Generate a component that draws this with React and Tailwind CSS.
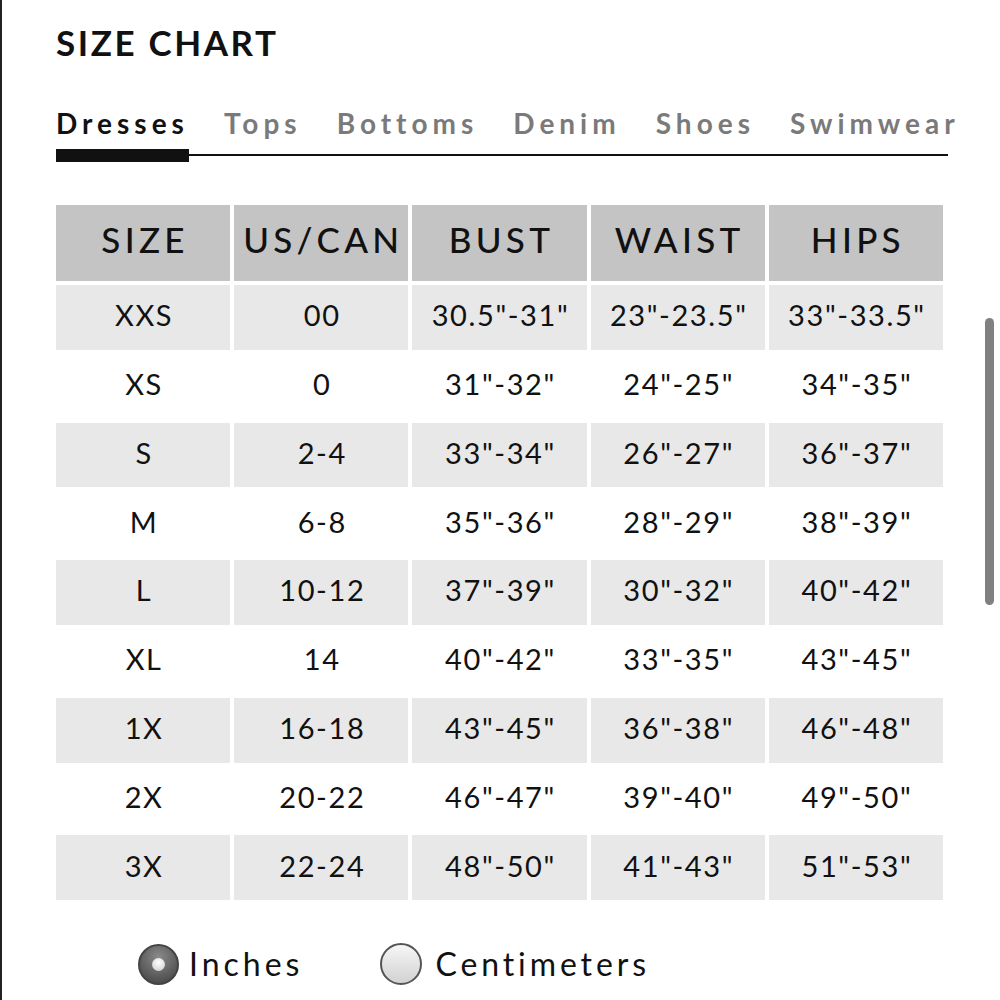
import React from "react";

const headers = ["SIZE", "US/CAN", "BUST", "WAIST", "HIPS"];
const rows = [
  ["XXS", "00", '30.5"-31"', '23"-23.5"', '33"-33.5"'],
  ["XS", "0", '31"-32"', '24"-25"', '34"-35"'],
  ["S", "2-4", '33"-34"', '26"-27"', '36"-37"'],
  ["M", "6-8", '35"-36"', '28"-29"', '38"-39"'],
  ["L", "10-12", '37"-39"', '30"-32"', '40"-42"'],
  ["XL", "14", '40"-42"', '33"-35"', '43"-45"'],
  ["1X", "16-18", '43"-45"', '36"-38"', '46"-48"'],
  ["2X", "20-22", '46"-47"', '39"-40"', '49"-50"'],
  ["3X", "22-24", '48"-50"', '41"-43"', '51"-53"'],
];
const tabs = ["Dresses", "Tops", "Bottoms", "Denim", "Shoes", "Swimwear"];

export default function App() {
  return (
    <div
      className="relative w-[1000px] h-[1000px] bg-white overflow-hidden border-l-2 border-[#222]"
      style={{ fontFamily: "Lato, 'Open Sans', sans-serif" }}
    >
      <div className="pl-[54px] pt-[22px]">
        <h1 className="text-[35px] leading-[40px] font-bold tracking-[2.6px] text-[#111]">SIZE CHART</h1>

        <div className="mt-[44px] flex items-center gap-[35px] text-[28px] leading-[34px] font-bold tracking-[5px] text-[#7a7a7a]">
          {tabs.map((t, i) => (
            <span key={t} className={i === 0 ? "text-[#111]" : ""}>{t}</span>
          ))}
        </div>
        <div className="relative mt-[9px] w-[892px] h-[13px]">
          <div className="absolute left-0 top-[5px] w-[892px] h-[2px] bg-[#111]" />
          <div className="absolute left-0 top-0 w-[133px] h-[13px] bg-[#111]" />
        </div>

        <div className="mt-[43px] w-[887px] grid grid-cols-5 gap-[4px]">
          {headers.map((h) => (
            <div key={h} className="h-[76px] pb-[7px] pl-[4px] bg-[#c4c4c4] flex items-center justify-center text-[35px] tracking-[4.3px] text-[#111] font-medium">
              {h}
            </div>
          ))}
          {rows.map((r, ri) =>
            r.map((c, ci) => (
              <div
                key={ri + "-" + ci}
                className={
                  "h-[64.8px] pb-[5px] pl-[2px] flex items-center justify-center text-[29px] tracking-[1.6px] text-[#111] " +
                  (ri % 2 === 0 ? "bg-[#e8e8e8]" : "bg-white")
                }
              >
                {c}
              </div>
            ))
          )}
        </div>

        <div className="mt-[40px] flex items-center">
          <div className="ml-[82px] w-[41px] h-[41px] rounded-full border-2 border-[#444] bg-[radial-gradient(circle_at_50%_30%,#8a8a8a,#3e3e3e)] flex items-center justify-center">
            <div className="w-[13px] h-[13px] rounded-full bg-[radial-gradient(circle_at_50%_35%,#ffffff,#c9c9c9)]" />
          </div>
          <span className="ml-[10px] text-[32px] tracking-[4px] text-[#111]">Inches</span>
          <div className="ml-[77px] w-[42px] h-[42px] rounded-full border-2 border-[#555] bg-[linear-gradient(#f6f6f6,#d2d2d2)]" />
          <span className="ml-[13px] text-[32px] tracking-[3.9px] text-[#111]">Centimeters</span>
        </div>
      </div>

      <div className="absolute left-[983px] top-[318px] w-[9px] h-[287px] rounded-full bg-[#808080]" />
    </div>
  );
}
